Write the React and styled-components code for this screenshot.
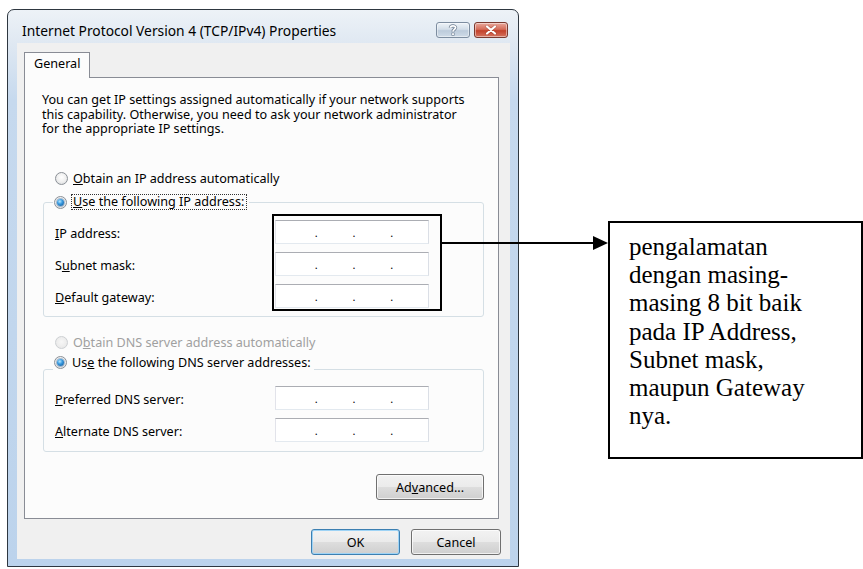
import React from 'react';
import styled, { createGlobalStyle } from 'styled-components';

const uiFont = `"Noto Sans", "DejaVu Sans", sans-serif`;

const GlobalStyle = createGlobalStyle`
  html, body { margin: 0; padding: 0; background: #fff; }
  * { box-sizing: border-box; }
`;

const Page = styled.div`
  position: relative;
  width: 863px;
  height: 569px;
  overflow: hidden;
  display: flex;
  align-items: flex-start;
  padding: 9px 0 0 7px;
  background: #fff;
  font-family: ${uiFont};
  font-size: 12.6px;
  color: #000;
`;

/* ---------- window chrome ---------- */

const Window = styled.div`
  width: 512px;
  height: 558px;
  flex: none;
  display: flex;
  flex-direction: column;
  padding: 0 8px 7px 9px;
  border: 1px solid #2e3740;
  border-radius: 7px 7px 0 0;
  background: linear-gradient(#edf2f7 0, #dfe8f2 34px, #c6d9ee 90px, #bcd3ec 100%);
`;

const TitleBar = styled.div`
  height: 33px;
  flex: none;
  display: flex;
  align-items: flex-start;
  justify-content: space-between;
  margin: 0 -8px 0 -9px;
  padding: 12px 10px 0 14px;
`;

const Title = styled.div`
  margin-top: 1px;
  font-size: 13.8px;
  line-height: 16px;
  color: #000;
`;

const CaptionButtons = styled.div`
  display: flex;
  gap: 4px;
`;

const CaptionButton = styled.div`
  width: 34px;
  height: 16px;
  border-radius: 3px;
  display: flex;
  align-items: center;
  justify-content: center;
  border: 1px solid ${p => (p.$close ? '#7a3a30' : '#7d8da0')};
  background: ${p =>
    p.$close
      ? 'linear-gradient(#e9a99c 0, #d56d5a 45%, #c3412b 55%, #d4735f 100%)'
      : 'linear-gradient(#eef3f8 0, #d3dee9 45%, #bccbdb 55%, #cfdbe7 100%)'};
  box-shadow: inset 0 0 0 1px rgba(255, 255, 255, 0.45);
`;

const Content = styled.div`
  flex: 1;
  display: flex;
  flex-direction: column;
  padding: 9px 9px 0 7px;
  background: #f0f0f0;
`;

/* ---------- tab ---------- */

const Tab = styled.div`
  position: relative;
  z-index: 1;
  width: 66px;
  height: 26px;
  margin-bottom: -1px;
  padding: 3px 0 0 9px;
  line-height: 16px;
  border: 1px solid #898c95;
  border-bottom: none;
  background: #fcfcfc;
`;

const TabPanel = styled.div`
  width: 475px;
  height: 442px;
  display: flex;
  flex-direction: column;
  padding: 15px 14px 0 17px;
  border: 1px solid #898c95;
  background: #fcfcfc;
`;

const Intro = styled.div`
  display: flex;
  flex-direction: column;
`;

const IntroLine = styled.div`
  height: 14.5px;
  line-height: 14.5px;
  white-space: nowrap;
`;

/* ---------- radios and group boxes ---------- */

const RadioRow = styled.div`
  display: flex;
  align-items: center;
  gap: 5px;
  height: 16px;
  margin: ${p => p.$margin || '0'};
  padding-left: 13px;
  color: ${p => (p.$disabled ? '#a0a0a0' : '#000')};
`;

const Radio = styled.span`
  width: 13px;
  height: 13px;
  flex: none;
  border-radius: 50%;
  display: flex;
  align-items: center;
  justify-content: center;
  border: 1px solid ${p => (p.$disabled ? '#cdd0d3' : '#8b9097')};
  background: ${p =>
    p.$disabled
      ? 'radial-gradient(circle at 50% 45%, #f7f7f7 0, #ececec 60%, #e2e2e2 100%)'
      : 'radial-gradient(circle at 50% 40%, #ffffff 0, #eeeeee 55%, #cfd2d5 100%)'};

  &::after {
    content: '';
    display: ${p => (p.$checked ? 'block' : 'none')};
    width: 7px;
    height: 7px;
    border-radius: 50%;
    background: radial-gradient(circle at 40% 35%, #b8e8ff 0, #3a9be0 40%, #0b4f90 100%);
    box-shadow: 0 0 0 1px rgba(20, 80, 140, 0.35);
  }
`;

const Focus = styled.span`
  outline: 1px dotted #333;
  outline-offset: 0;
  padding: 0 2px 0 1px;
  line-height: 14px;
`;

const Group = styled.fieldset`
  margin: ${p => p.$margin} 0 0 1px;
  width: 441px;
  padding: ${p => p.$pad};
  border: 1px solid #d5dfe5;
  border-radius: 3px;
`;

const Legend = styled.legend`
  display: flex;
  align-items: center;
  gap: 5px;
  height: ${p => 16 + (p.$lift || 0)}px;
  padding: 0 3px ${p => p.$lift || 0}px 1px;
  margin-left: 0;
`;

const Rows = styled.div`
  display: grid;
  grid-template-columns: 1fr 154px;
  grid-auto-rows: 24px;
  row-gap: 8px;
  padding-left: 2px;
`;

const Label = styled.div`
  align-self: center;
  margin-top: 3px;
  line-height: 14px;
`;

const Field = styled.div`
  width: 154px;
  height: 24px;
  display: flex;
  align-items: center;
  justify-content: space-evenly;
  padding-left: 4px;
  background: #fff;
  border: 1px solid;
  border-color: #abadb3 #dbdfe6 #e3e9ef #e2e3ea;
  font-size: 11px;
`;

const Dot = styled.span`
  width: 3px;
  text-align: center;
  line-height: 14px;
  margin-top: 2px;
`;

const IpField = () => (
  <Field>
    <Dot>.</Dot>
    <Dot>.</Dot>
    <Dot>.</Dot>
  </Field>
);

/* ---------- push buttons ---------- */

const Button = styled.div`
  width: ${p => p.$w}px;
  height: 26px;
  display: flex;
  align-items: center;
  justify-content: center;
  border-radius: 3px;
  border: 1px solid ${p => (p.$default ? '#3c7fb1' : '#707070')};
  background: linear-gradient(#f2f2f2 0, #ebebeb 48%, #dddddd 52%, #cfcfcf 100%);
  box-shadow: inset 0 0 0 1px ${p => (p.$default ? '#9ed3f5' : 'rgba(255,255,255,0.7)')};
`;

const AdvancedRow = styled.div`
  display: flex;
  justify-content: flex-end;
  margin-top: 22px;
`;

const Footer = styled.div`
  display: flex;
  justify-content: flex-end;
  gap: 11px;
  margin-top: 10px;
`;

/* ---------- note on the right ---------- */

const Note = styled.div`
  width: 255px;
  height: 238px;
  flex: none;
  margin: 212px 0 0 89px;
  padding: 10px 8px 0 19px;
  border: 2px solid #000;
  font-family: "Liberation Serif", "Times New Roman", serif;
  font-size: 25px;
  line-height: 28.2px;
  color: #000;
`;

const Highlight = styled.div`
  position: absolute;
  left: 272px;
  top: 214px;
  width: 170px;
  height: 97px;
  border: 2px solid #000;
  pointer-events: none;
`;

const Arrow = styled.svg`
  position: absolute;
  left: 441px;
  top: 235px;
`;

export default function App() {
  return (
    <>
      <GlobalStyle />
      <Page>
        <Window>
          <TitleBar>
            <Title>Internet Protocol Version 4 (TCP/IPv4) Properties</Title>
            <CaptionButtons>
              <CaptionButton>
                <svg width="10" height="12" viewBox="0 0 10 12">
                  <path d="M2.4 3.8 C2.4 1.3 7.6 1.3 7.6 3.6 C7.6 5.4 5 5.4 5 7.6" fill="none" stroke="#6c7c90" strokeWidth="3.2" />
                  <rect x="3.5" y="8.6" width="3" height="3" fill="#6c7c90" />
                  <path d="M2.4 3.8 C2.4 1.3 7.6 1.3 7.6 3.6 C7.6 5.4 5 5.4 5 7.6" fill="none" stroke="#fff" strokeWidth="1.8" />
                  <rect x="4.1" y="9.2" width="1.8" height="1.8" fill="#fff" />
                </svg>
              </CaptionButton>
              <CaptionButton $close>
                <svg width="12" height="10" viewBox="0 0 12 10">
                  <path d="M2 1.5 L10 8.5 M10 1.5 L2 8.5" stroke="#6a1e12" strokeWidth="3.2" strokeLinecap="round" opacity="0.35" />
                  <path d="M2 1.5 L10 8.5 M10 1.5 L2 8.5" stroke="#fff" strokeWidth="2.2" strokeLinecap="round" />
                </svg>
              </CaptionButton>
            </CaptionButtons>
          </TitleBar>

          <Content>
            <Tab>General</Tab>
            <TabPanel>
              <Intro>
                <IntroLine>You can get IP settings assigned automatically if your network supports</IntroLine>
                <IntroLine>this capability. Otherwise, you need to ask your network administrator</IntroLine>
                <IntroLine>for the appropriate IP settings.</IntroLine>
              </Intro>

              <RadioRow $margin="33.5px 0 0 0">
                <Radio />
                <span><u>O</u>btain an IP address automatically</span>
              </RadioRow>

              <Group $margin="8px" $pad="10px 54px 8px 9px">
                <Legend>
                  <Radio $checked />
                  <Focus><u>U</u>se the following IP address:</Focus>
                </Legend>
                <Rows>
                  <Label><u>I</u>P address:</Label>
                  <IpField />
                  <Label>S<u>u</u>bnet mask:</Label>
                  <IpField />
                  <Label><u>D</u>efault gateway:</Label>
                  <IpField />
                </Rows>
              </Group>

              <RadioRow $margin="17px 0 0 0" $disabled>
                <Radio $disabled />
                <span>O<u>b</u>tain DNS server address automatically</span>
              </RadioRow>

              <Group $margin="4px" $pad="2px 54px 9px 9px">
                <Legend $lift={14}>
                  <Radio $checked />
                  <span>Us<u>e</u> the following DNS server addresses:</span>
                </Legend>
                <Rows>
                  <Label><u>P</u>referred DNS server:</Label>
                  <IpField />
                  <Label><u>A</u>lternate DNS server:</Label>
                  <IpField />
                </Rows>
              </Group>

              <AdvancedRow>
                <Button $w={108}>Ad<u>v</u>anced...</Button>
              </AdvancedRow>
            </TabPanel>

            <Footer>
              <Button $w={89} $default>OK</Button>
              <Button $w={90}>Cancel</Button>
            </Footer>
          </Content>
        </Window>

        <Note>
          pengalamatan
          <br />
          dengan masing-
          <br />
          masing 8 bit baik
          <br />
          pada IP Address,
          <br />
          Subnet mask,
          <br />
          maupun Gateway
          <br />
          nya.
        </Note>

        <Highlight />
        <Arrow width="168" height="16" viewBox="0 0 168 16">
          <line x1="0" y1="8" x2="154" y2="8" stroke="#000" strokeWidth="2" />
          <polygon points="152,1 167,8 152,15" fill="#000" />
        </Arrow>
      </Page>
    </>
  );
}
